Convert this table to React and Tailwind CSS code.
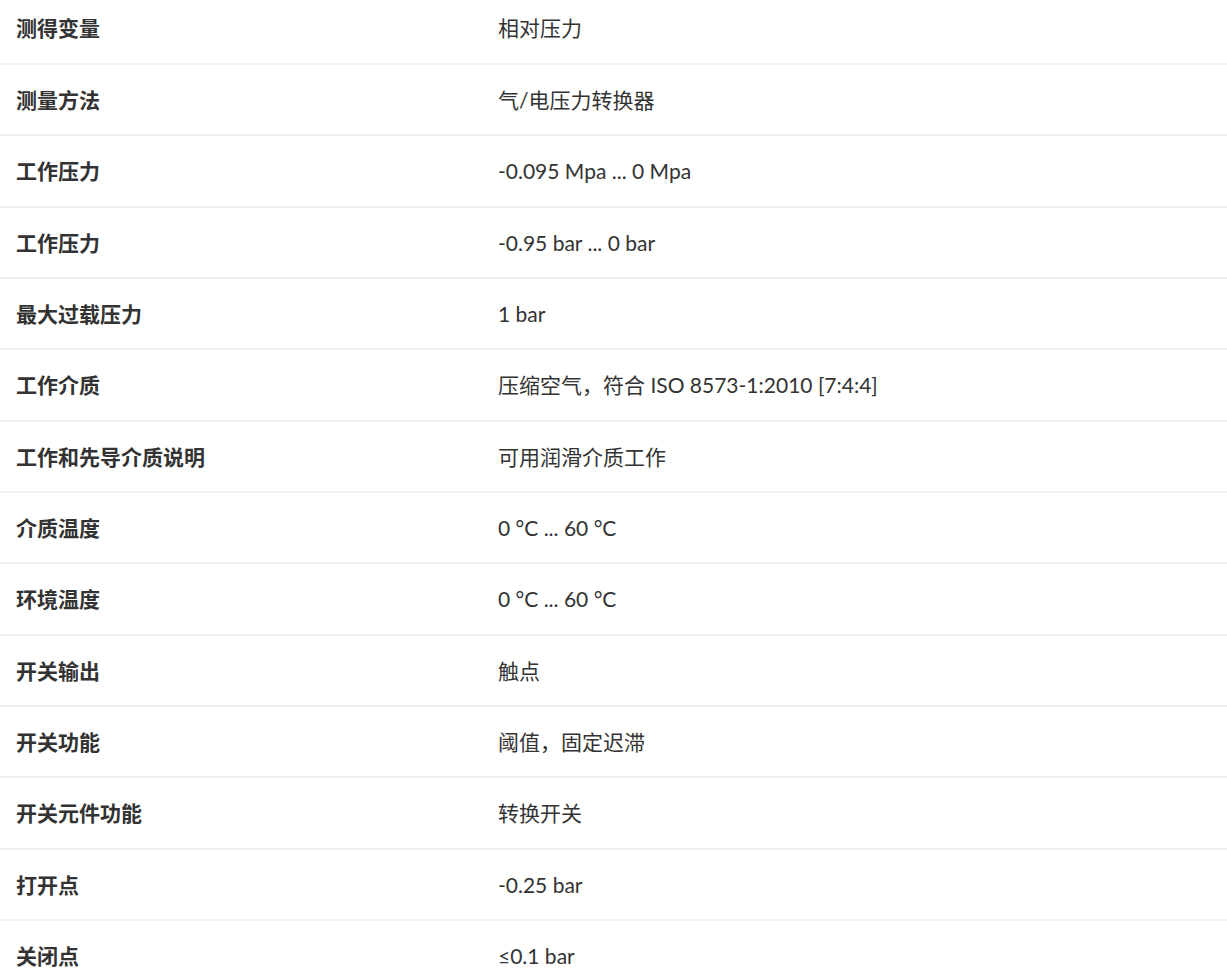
const rows = [
  ["测得变量", "相对压力"],
  ["测量方法", "气/电压力转换器"],
  ["工作压力", "-0.095 Mpa ... 0 Mpa"],
  ["工作压力", "-0.95 bar ... 0 bar"],
  ["最大过载压力", "1 bar"],
  ["工作介质", "压缩空气，符合 ISO 8573-1:2010 [7:4:4]"],
  ["工作和先导介质说明", "可用润滑介质工作"],
  ["介质温度", "0 °C ... 60 °C"],
  ["环境温度", "0 °C ... 60 °C"],
  ["开关输出", "触点"],
  ["开关功能", "阈值，固定迟滞"],
  ["开关元件功能", "转换开关"],
  ["打开点", "-0.25 bar"],
  ["关闭点", "≤0.1 bar"],
];

const font = {
  fontFamily: 'Lato, "Noto Sans CJK SC", sans-serif',
};

export default function App() {
  return (
    <div className="w-full bg-white text-[#333333]" style={font}>
      {rows.map(([label, value], i) => (
        <div
          key={i}
          className={`flex border-b-2 border-[#f0f0f0] text-[21px] leading-[24px] ${
            i === 0 ? "h-[65px] pt-[16px]" : "h-[71.33px] pt-[23px]"
          }`}
        >
          <div className="w-[482px] shrink-0 pl-4 font-bold">{label}</div>
          <div className="pl-4">{value}</div>
        </div>
      ))}
    </div>
  );
}
